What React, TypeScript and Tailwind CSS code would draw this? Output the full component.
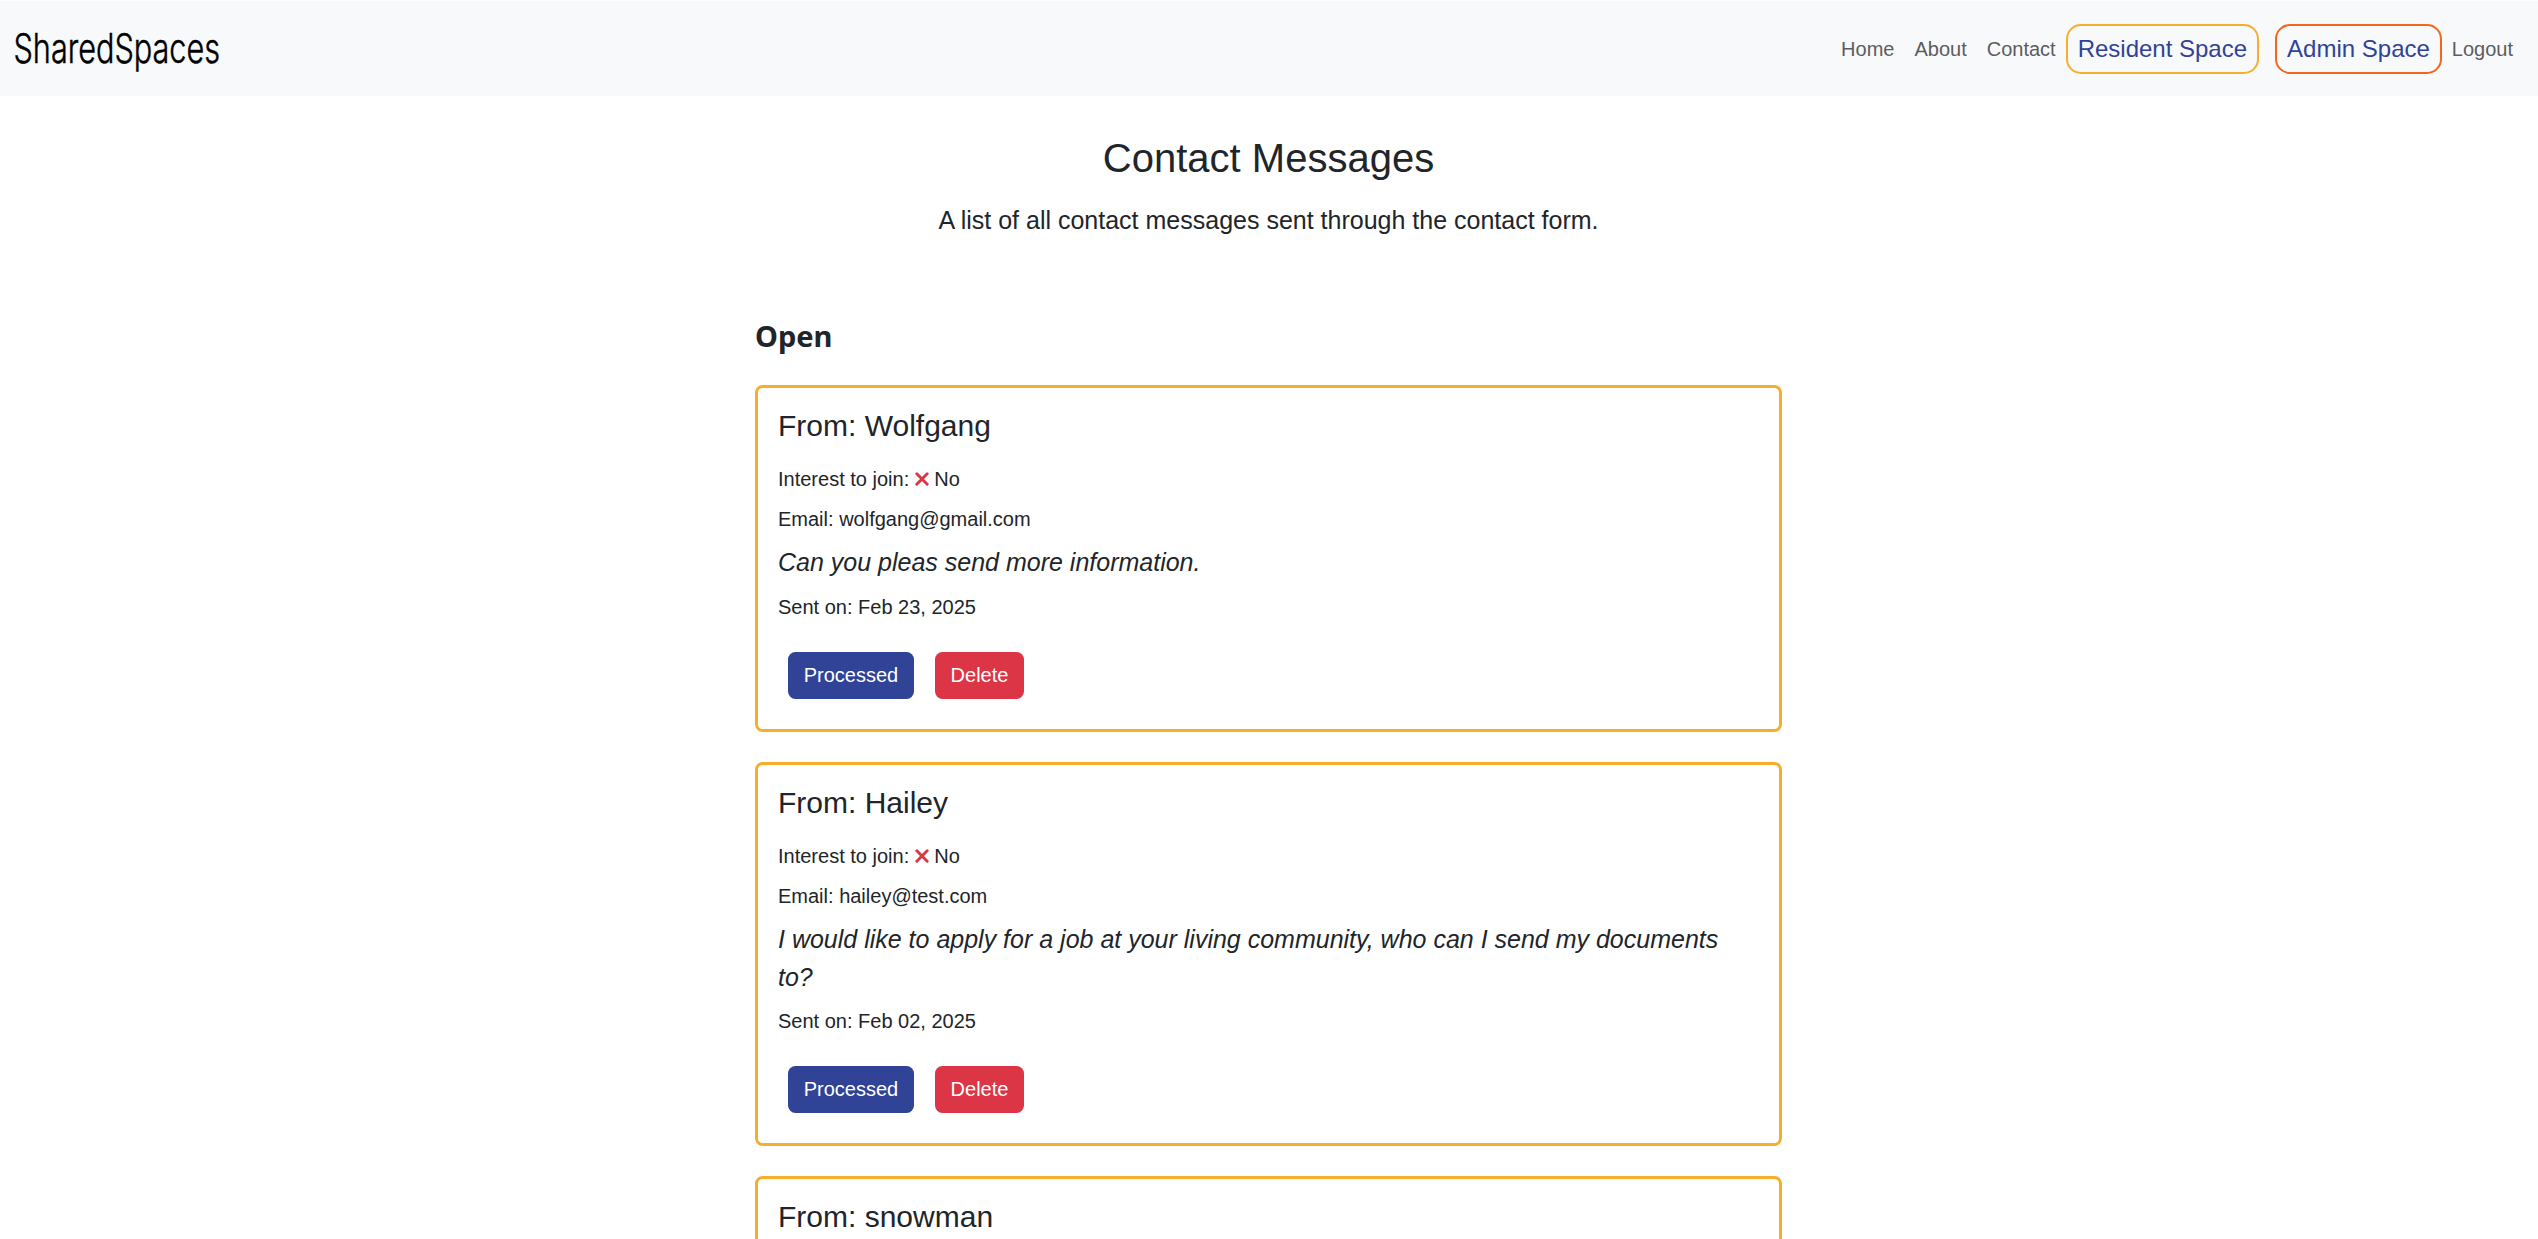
import React from "react";

type Details = { email: string; text: string; date: string };
type Message = { name: string; details?: Details };

const messages: Message[] = [
  {
    name: "Wolfgang",
    details: { email: "wolfgang@gmail.com", text: "Can you pleas send more information.", date: "Feb 23, 2025" },
  },
  {
    name: "Hailey",
    details: {
      email: "hailey@test.com",
      text: "I would like to apply for a job at your living community, who can I send my documents to?",
      date: "Feb 02, 2025",
    },
  },
  { name: "snowman" },
];

function Navbar() {
  return (
    <header className="mt-px flex h-[95px] items-center justify-between bg-[#f8f9fb] px-[15px]">
      <svg width="210" height="50" viewBox="0 0 210 50" className="overflow-visible" role="img" aria-label="SharedSpaces">
        <text
          x="-1.5"
          y="39"
          fontFamily="Inter, sans-serif"
          fontSize="41.5"
          fontWeight="300"
          textLength="206.5"
          lengthAdjust="spacingAndGlyphs"
          fill="#000"
          stroke="#000"
          strokeWidth="0.5"
        >
          SharedSpaces
        </text>
      </svg>
      <nav className="flex items-center text-[20px] leading-[30px] text-[#5d5d5e]">
        <a className="px-[10px]">Home</a>
        <a className="px-[10px]">About</a>
        <a className="px-[10px]">Contact</a>
        <a className="mr-4 rounded-[15px] border-2 border-[#f9ae2b] px-[10px] py-[5px] text-[24px] leading-[36px] text-[#304396]">
          Resident Space
        </a>
        <a className="rounded-[15px] border-2 border-[#f4661b] px-[10px] py-[5px] text-[24px] leading-[36px] text-[#304396]">
          Admin Space
        </a>
        <a className="px-[10px]">Logout</a>
      </nav>
    </header>
  );
}

function CrossIcon() {
  return (
    <svg
      viewBox="0 0 14 14"
      className="inline h-[14px] w-[14px] align-[0.5px] text-[#dc3545]"
      fill="none"
      stroke="currentColor"
      strokeWidth="2.9"
      strokeLinecap="round"
    >
      <path d="M1.8 1.8 12.2 12.2M12.2 1.8 1.8 12.2" />
    </svg>
  );
}

function MessageCard({ name, details }: Message) {
  return (
    <article className="min-h-[347px] rounded-[7.5px] border-3 border-[#f7ae2c] px-5 pt-5 pb-[30px]">
      <h3 className="mb-5 text-[30px] leading-[36px]">From: {name}</h3>
      {details && (
        <>
          <p className="mb-[10px] h-[30px]">
            Interest to join: <CrossIcon /> No
          </p>
          <p className="mb-[10px]">Email: {details.email}</p>
          <p className="mb-[10px] text-[25px] leading-[37.5px] italic">{details.text}</p>
          <p>Sent on: {details.date}</p>
          <div className="mt-[30px] ml-[10px] flex gap-[21px] text-white">
            <button className="h-[47px] w-[126px] rounded-[7.5px] bg-[#304396] pb-px">Processed</button>
            <button className="h-[47px] w-[89px] rounded-[7.5px] bg-[#dc3545] pb-px">Delete</button>
          </div>
        </>
      )}
    </article>
  );
}

export default function App() {
  return (
    <div className="h-[1239px] overflow-hidden bg-white font-['Liberation_Sans',Arial,sans-serif] text-[20px] leading-[30px] text-[#212529]">
      <Navbar />
      <main className="mr-auto ml-[755px] w-[1027px] pt-[38px]">
        <h1 className="mb-5 text-center text-[40px] leading-[48px]">Contact Messages</h1>
        <p className="text-center text-[25px] leading-[37.5px]">
          A list of all contact messages sent through the contact form.
        </p>
        <h2 className="mt-[78.5px] mb-[31px] font-['Noto_Sans',sans-serif] text-[29px] leading-[36px] font-bold">Open</h2>
        <div className="flex flex-col gap-[30px]">
          {messages.map((m) => (
            <MessageCard key={m.name} {...m} />
          ))}
        </div>
      </main>
    </div>
  );
}
